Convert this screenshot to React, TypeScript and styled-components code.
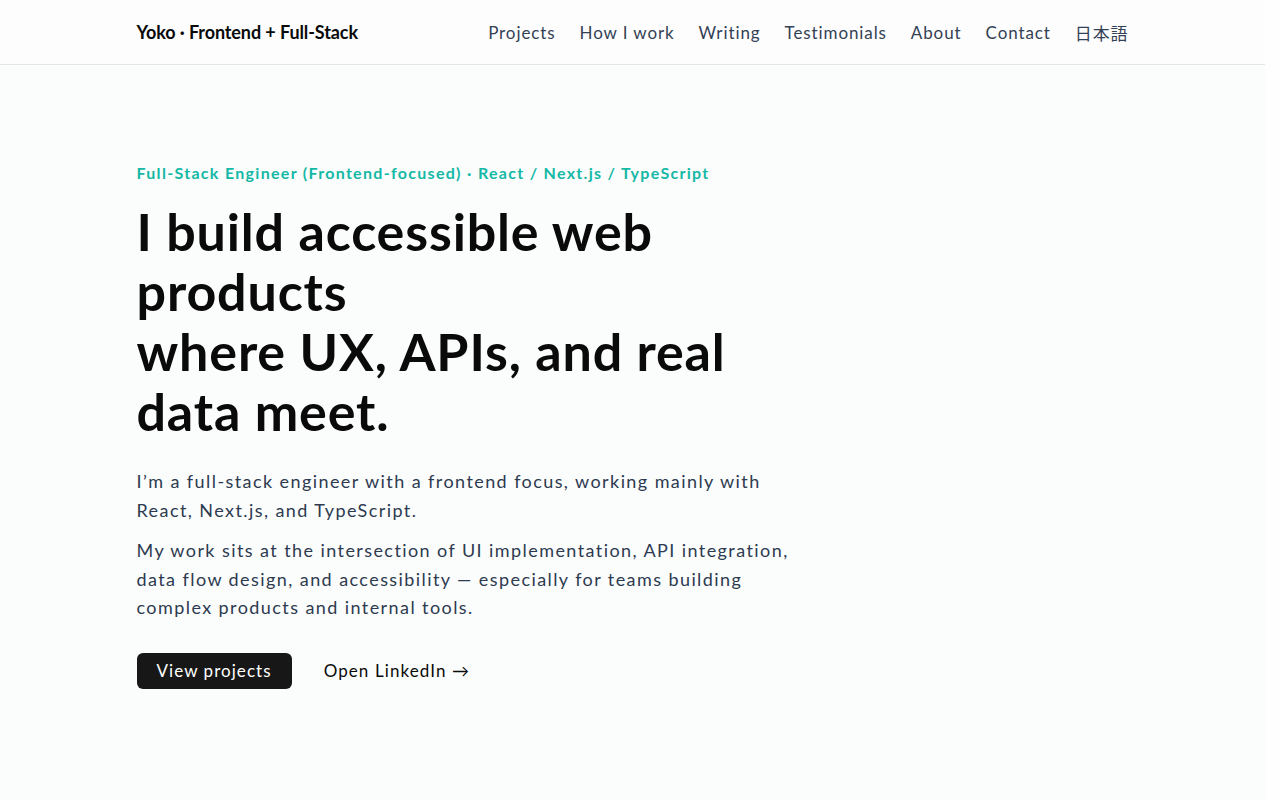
import React from 'react'
import styled, { createGlobalStyle } from 'styled-components'

const GlobalStyle = createGlobalStyle`
  html, body {
    margin: 0;
    padding: 0;
    background: #fdfefd;
    font-family: Lato, "Noto Sans", "Noto Sans CJK JP", sans-serif;
    color: #0a0a0a;
  }
  /* keep the 15px scrollbar gutter of the original capture */
  #root {
    margin-right: 15px;
    min-height: 800px;
    background: #fbfdfc;
  }
  * {
    box-sizing: border-box;
  }
`

const Header = styled.header`
  background: #fdfdfd;
  border-bottom: 1px solid #e5e5e5;
`

const Container = styled.div`
  max-width: 1024px;
  margin: 0 auto;
  padding: 0 16px;
`

const HeaderInner = styled(Container)`
  height: 64px;
  display: flex;
  align-items: center;
  justify-content: space-between;
`

const Brand = styled.a`
  font-size: 18px;
  font-weight: 700;
  color: #0a0a0a;
  text-decoration: none;
  letter-spacing: -0.1px;
`

const Nav = styled.nav`
  display: flex;
  align-items: center;
  gap: 24px;
`

const NavLink = styled.a`
  font-size: 17px;
  color: #334155;
  text-decoration: none;
  letter-spacing: 0.9px;
`

const Hero = styled.section`
  padding: 96px 0 96px;
`

const HeroBody = styled.div`
  max-width: 660px;
`

const Eyebrow = styled.p`
  margin: 0 0 16px;
  font-size: 16px;
  font-weight: 700;
  color: #14b8a6;
  letter-spacing: 1.3px;
  line-height: 24px;
`

const Title = styled.h1`
  margin: 0 0 26px;
  font-size: 52px;
  line-height: 60px;
  font-weight: 700;
  letter-spacing: 0.85px;
  color: #0a0a0a;
`

const Lead = styled.p`
  margin: 0 0 12px;
  font-size: 18px;
  line-height: 28.5px;
  color: #2d3a50;
  letter-spacing: 1.42px;
`

const Actions = styled.div`
  display: flex;
  align-items: center;
  gap: 32px;
  margin-top: 31px;
`

const PrimaryButton = styled.a`
  display: inline-flex;
  align-items: center;
  height: 36px;
  padding: 0 20px;
  border-radius: 6px;
  background: #171717;
  color: #fff;
  font-size: 17px;
  letter-spacing: 1.05px;
  text-decoration: none;
`

const TextLink = styled.a`
  font-size: 17px;
  color: #0a0a0a;
  letter-spacing: 1.1px;
  text-decoration: none;
`

const links = ['Projects', 'How I work', 'Writing', 'Testimonials', 'About', 'Contact', '日本語']

export default function App() {
  return (
    <>
      <GlobalStyle />
      <Header>
        <HeaderInner>
          <Brand href="#">Yoko · Frontend + Full-Stack</Brand>
          <Nav>
            {links.map((l) => (
              <NavLink key={l} href="#">
                {l}
              </NavLink>
            ))}
          </Nav>
        </HeaderInner>
      </Header>
      <main>
        <Container>
          <Hero>
            <HeroBody>
              <Eyebrow>Full-Stack Engineer (Frontend-focused) · React / Next.js / TypeScript</Eyebrow>
              <Title>
                I build accessible web products
                <br />
                where UX, APIs, and real data meet.
              </Title>
              <Lead>
                I’m a full-stack engineer with a frontend focus, working mainly with React, Next.js, and
                TypeScript.
              </Lead>
              <Lead>
                My work sits at the intersection of UI implementation, API integration, data flow design,
                and accessibility — especially for teams building complex products and internal tools.
              </Lead>
              <Actions>
                <PrimaryButton href="#">View projects</PrimaryButton>
                <TextLink href="#">Open LinkedIn →</TextLink>
              </Actions>
            </HeroBody>
          </Hero>
        </Container>
      </main>
    </>
  )
}
